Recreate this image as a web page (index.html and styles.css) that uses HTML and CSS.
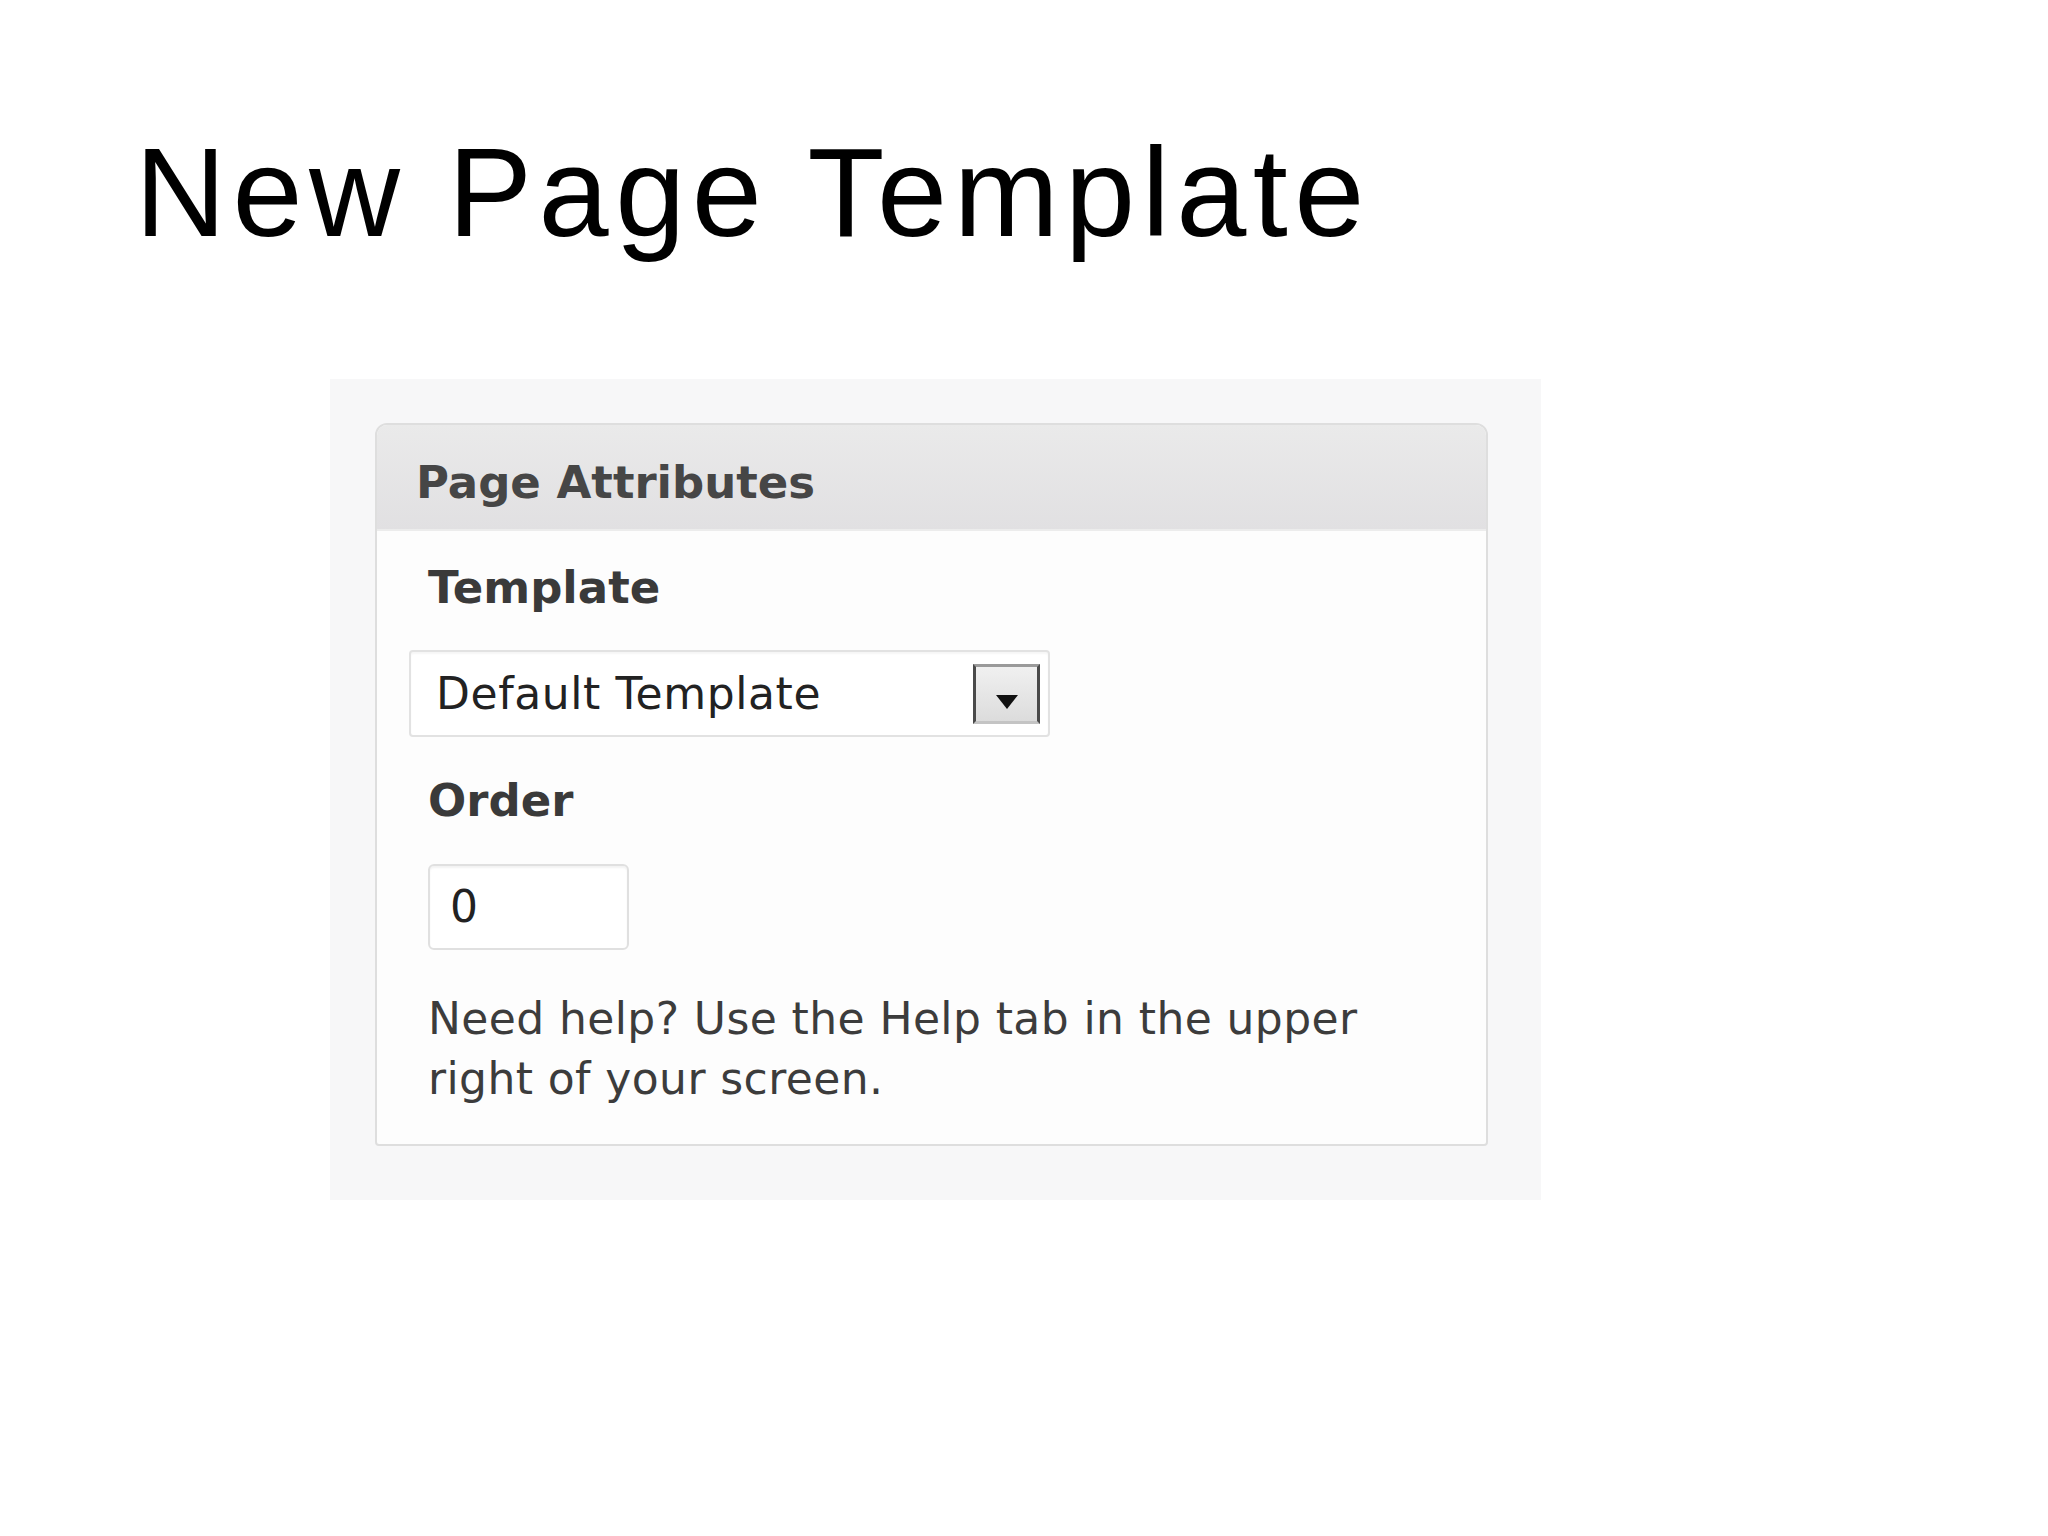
FILE: index.html
```html
<!DOCTYPE html>
<html lang="en">
<head>
  <meta charset="UTF-8" />
  <title>New Page Template</title>
  <link rel="stylesheet" href="styles.css">
</head>
<body>
  <h1 class="slide-title">New Page Template</h1>

  <!-- screenshot area -->
  <div class="shot">
    <div class="postbox">
      <div class="postbox-head">Page Attributes</div>
      <div class="postbox-body">
        <div class="field-label">Template</div>
        <div class="select">
          <span class="select-value">Default Template</span>
          <span class="select-btn"><span class="arrow"></span></span>
        </div>
        <div class="field-label">Order</div>
        <div class="order-input">0</div>
        <p class="help">Need help? Use the Help tab in the upper<br />right of your screen.</p>
      </div>
    </div>
  </div>
</body>
</html>
```

FILE: styles.css
```css
body {
  margin: 0;
  background: #fff;
  color: #000;
}

.slide-title {
  margin: 130px 0 0 135px;
  font-family: "Liberation Sans", Arial, sans-serif;
  font-weight: normal;
  font-size: 126px;
  line-height: 126px;
  letter-spacing: 6.5px;
}

.shot {
  box-sizing: border-box;
  width: 1211px;
  height: 821px;
  margin: 123px 0 0 330px;
  padding: 44px 53px 0 45px;
  background: #f7f7f8;
}

.postbox {
  box-sizing: border-box;
  height: 723px;
  background: #fdfdfd;
  border: 2px solid #dedede;
  border-radius: 12px 12px 4px 4px;
  font-family: "DejaVu Sans", Verdana, sans-serif;
  color: #333;
}

.postbox-head {
  box-sizing: border-box;
  height: 106px;
  padding: 28px 0 0 39px;
  border-radius: 10px 10px 0 0;
  background: linear-gradient(#eaeaea, #e1e0e2);
  border-bottom: 2px solid #ececec;
  font-size: 45px;
  font-weight: bold;
  line-height: 60px;
  color: #464646;
}

.postbox-body {
  padding: 27px 0 0 51px;
}

.field-label {
  font-size: 45px;
  font-weight: bold;
  line-height: 60px;
  color: #3a3a3a;
}

.select {
  box-sizing: border-box;
  display: flex;
  align-items: center;
  justify-content: space-between;
  width: 641px;
  height: 87px;
  margin: 32px 0 34px -19px;
  padding: 0 8px 0 25px;
  background: #fff;
  border: 2px solid #e2e2e2;
  border-radius: 4px;
  box-shadow: inset 0 2px 2px rgba(0, 0, 0, 0.04);
  font-size: 44px;
  line-height: 60px;
  letter-spacing: 0.6px;
  color: #222;
}

.select-btn {
  box-sizing: border-box;
  display: flex;
  justify-content: center;
  align-items: flex-end;
  width: 67px;
  height: 60px;
  padding-bottom: 12px;
  background: linear-gradient(#f0f0f0, #dcdcdc);
  border: 3px solid #4a4a4a;
  border-top-color: #9a9a9a;
  border-bottom-color: #c4c4c4;
}

.arrow {
  width: 0;
  height: 0;
  border-left: 11px solid transparent;
  border-right: 11px solid transparent;
  border-top: 14px solid #111;
}

.order-input {
  box-sizing: border-box;
  width: 201px;
  height: 86px;
  margin-top: 33px;
  padding-left: 20px;
  background: #fff;
  border: 2px solid #e0e0e0;
  border-radius: 6px;
  box-shadow: inset 0 2px 2px rgba(0, 0, 0, 0.05);
  font-size: 44px;
  line-height: 82px;
  color: #222;
}

.help {
  margin: 39px 0 0;
  font-size: 44px;
  line-height: 60px;
  letter-spacing: 0.4px;
  color: #3c3c3c;
}
```
